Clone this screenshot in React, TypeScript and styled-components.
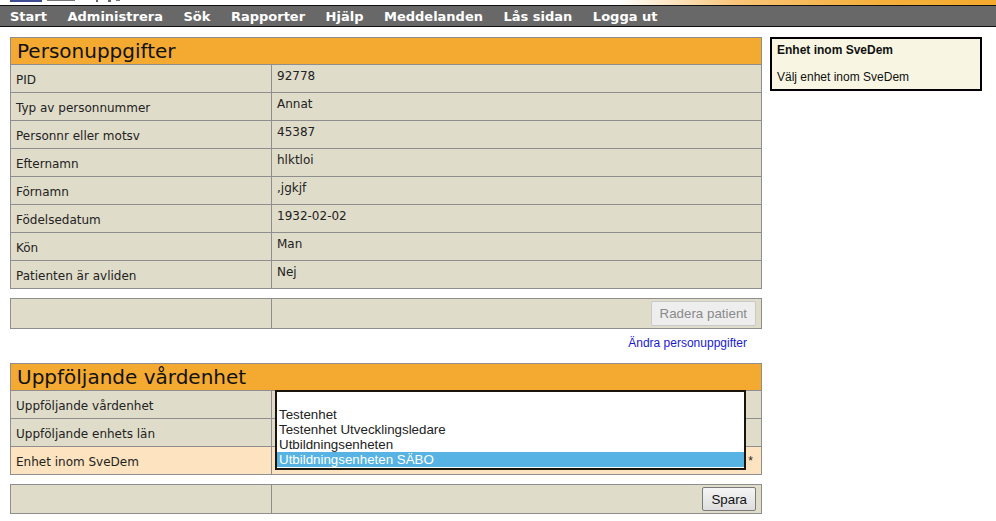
import * as React from "react"
import styled, { createGlobalStyle } from "styled-components"

const GlobalStyle = createGlobalStyle`
  html, body {
    margin: 0;
    padding: 0;
    background: #fff;
    font-family: "DejaVu Sans", Verdana, sans-serif;
  }
`

const TopStrip = styled.div`
  height: 5px;
  overflow: hidden;
  display: flex;
  align-items: flex-end;
  padding-left: 10px;
  background: linear-gradient(to right, #fff 0%, #fff 62%, #f8c478 74%, #f5b03c 88%, #f4aa2e 100%);
`

const Nav = styled.nav`
  display: flex;
  height: 20px;
  align-items: center;
  padding-left: 10px;
  background: #686868;
  border-top: 1px solid #111;
  border-bottom: 1px solid #111;
`

const NavItem = styled.a`
  color: #fff;
  font: bold 13px "DejaVu Sans", Verdana, sans-serif;
  margin-right: 20.5px;
  text-decoration: none;
  white-space: nowrap;
`

const Content = styled.div`
  display: flex;
  align-items: flex-start;
  gap: 8px;
  padding: 10px 10px 0 10px;
`

const Main = styled.main`
  width: 752px;
`

const Panel = styled.section`
  position: relative;
  border: 1px solid #8e8e8e;
  background: #e0dcca;
`

const PanelTitle = styled.h2`
  margin: 0;
  height: 26px;
  padding-left: 6px;
  background: #f4aa30;
  color: #111;
  font: normal 20px "DejaVu Sans", Verdana, sans-serif;
  line-height: 26px;
`

const Row = styled.div<{ $height?: number; $highlight?: boolean; $first?: boolean }>`
  display: grid;
  grid-template-columns: 261px 1fr;
  height: ${p => p.$height ?? 27}px;
  border-top: ${p => (p.$first ? "none" : "1px solid #8e8e8e")};
  background: ${p => (p.$highlight ? "#fde3bf" : "#e0dcca")};
`

const Label = styled.div`
  display: flex;
  align-items: center;
  padding: 3px 0 0 5px;
  border-right: 1px solid #8e8e8e;
  color: #222;
  font-size: 12px;
`

const Value = styled.div`
  padding: 4px 0 0 5px;
  color: #222;
  font-size: 12px;
  line-height: 14px;
`

const ActionCell = styled.div`
  display: flex;
  align-items: center;
  justify-content: flex-end;
  padding-right: 5px;
`

const SelectCell = styled.div`
  position: relative;
  display: flex;
  align-items: center;
  justify-content: flex-end;
  padding-right: 8px;
  font: 12px "Liberation Sans", Arial, sans-serif;
  color: #222;
`

const Button = styled.button`
  height: ${p => (p.disabled ? 25 : 24)}px;
  padding: 0 8px;
  border: 1px solid ${p => (p.disabled ? "#c9c9c9" : "#7a7a7a")};
  border-radius: 2px;
  background: ${p =>
    p.disabled ? "#eeeeee" : "linear-gradient(#f5f5f5, #dddddd)"};
  color: ${p => (p.disabled ? "#8a8a8a" : "#111")};
  font: 13.33px "Liberation Sans", Arial, sans-serif;
`

const LinkRow = styled.div`
  height: 34px;
  box-sizing: border-box;
  padding: 7px 15px 0 0;
  text-align: right;
  font: 12px "Liberation Sans", Arial, sans-serif;
  line-height: 14px;
`

const EditLink = styled.a`
  color: #1a1acc;
  text-decoration: none;
`

const Gap = styled.div`
  height: 9px;
`

const ListBox = styled.div`
  position: absolute;
  left: 3px;
  top: -57px;
  width: 471px;
  height: 80px;
  box-sizing: border-box;
  border: 2px solid #1a140c;
  background: #fff;
  font: 13.33px "Liberation Sans", Arial, sans-serif;
`

const Option = styled.div<{ $selected?: boolean }>`
  height: 15px;
  line-height: 15px;
  padding-left: 2px;
  color: ${p => (p.$selected ? "#fff" : "#222")};
  background: ${p => (p.$selected ? "#56b3e3" : "transparent")};
  white-space: nowrap;
`

const InfoBox = styled.aside`
  width: 212px;
  box-sizing: border-box;
  padding: 4px 5px 5px 5px;
  border: 2px solid #000;
  background: #f8f6e3;
  font: 12px "Liberation Sans", Arial, sans-serif;
  line-height: 14px;
  color: #111;
`

const InfoTitle = styled.div`
  font-weight: bold;
  margin-bottom: 13px;
`

const Logo = () => (
  <svg width="120" height="5" viewBox="0 0 120 5">
    <rect x="0" y="0" width="32" height="2" fill="#3d4c92" />
    <rect x="37" y="0" width="28" height="1" fill="#777" />
    <rect x="86" y="0" width="2" height="2" fill="#666" />
    <rect x="98" y="0" width="3" height="2" fill="#666" />
    <rect x="106" y="0" width="4" height="1" fill="#777" />
  </svg>
)

const person: [string, string][] = [
  ["PID", "92778"],
  ["Typ av personnummer", "Annat"],
  ["Personnr eller motsv", "45387"],
  ["Efternamn", "hlktloi"],
  ["Förnamn", ",jgkjf"],
  ["Födelsedatum", "1932-02-02"],
  ["Kön", "Man"],
  ["Patienten är avliden", "Nej"],
]

const units = ["", "Testenhet", "Testenhet Utvecklingsledare", "Utbildningsenheten", "Utbildningsenheten SÄBO"]

const menu = ["Start", "Administrera", "Sök", "Rapporter", "Hjälp", "Meddelanden", "Lås sidan", "Logga ut"]

const App = () => (
  <>
    <GlobalStyle />
    <TopStrip>
      <Logo />
    </TopStrip>
    <Nav>
      {menu.map(m => (
        <NavItem key={m} href="#">
          {m}
        </NavItem>
      ))}
    </Nav>
    <Content>
      <Main>
        <Panel>
          <PanelTitle>Personuppgifter</PanelTitle>
          {person.map(([label, value]) => (
            <Row key={label}>
              <Label>{label}</Label>
              <Value>{value}</Value>
            </Row>
          ))}
        </Panel>
        <Gap />
        <Panel>
          <Row $height={29} $first>
            <Label />
            <ActionCell>
              <Button disabled>Radera patient</Button>
            </ActionCell>
          </Row>
        </Panel>
        <LinkRow>
          <EditLink href="#">Ändra personuppgifter</EditLink>
        </LinkRow>
        <Panel>
          <PanelTitle>Uppföljande vårdenhet</PanelTitle>
          <Row>
            <Label>Uppföljande vårdenhet</Label>
            <Value />
          </Row>
          <Row>
            <Label>Uppföljande enhets län</Label>
            <Value />
          </Row>
          <Row $highlight>
            <Label>Enhet inom SveDem</Label>
            <SelectCell>
              <ListBox role="listbox">
                {units.map((u, i) => (
                  <Option key={i} $selected={i === units.length - 1}>
                    {u}
                  </Option>
                ))}
              </ListBox>
              *
            </SelectCell>
          </Row>
        </Panel>
        <Gap />
        <Panel>
          <Row $height={28} $first>
            <Label />
            <ActionCell>
              <Button>Spara</Button>
            </ActionCell>
          </Row>
        </Panel>
      </Main>
      <InfoBox>
        <InfoTitle>Enhet inom SveDem</InfoTitle>
        Välj enhet inom SveDem
      </InfoBox>
    </Content>
  </>
)

export default App
